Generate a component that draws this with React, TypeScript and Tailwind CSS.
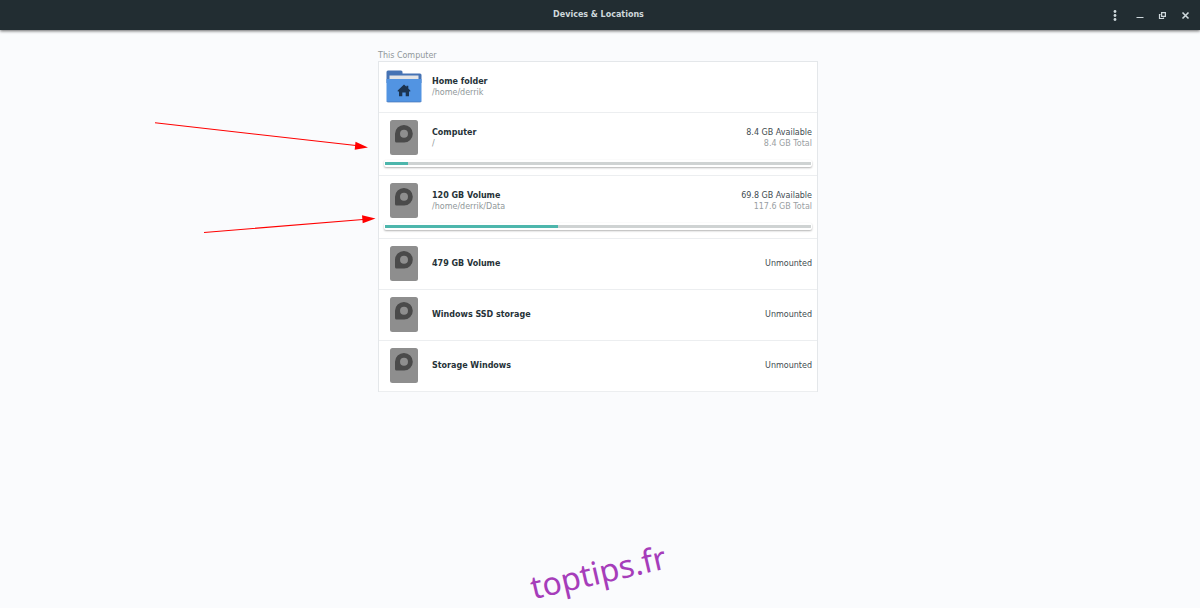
import React from 'react';

interface Place {
  name: string;
  kind: 'home' | 'drive';
  path?: string;
  available?: string;
  total?: string;
  used?: number;
}

const places: Place[] = [
  { name: 'Home folder', kind: 'home', path: '/home/derrik' },
  { name: 'Computer', kind: 'drive', path: '/', available: '8.4 GB Available', total: '8.4 GB Total', used: 5.4 },
  { name: '120 GB Volume', kind: 'drive', path: '/home/derrik/Data', available: '69.8 GB Available', total: '117.6 GB Total', used: 40.6 },
  { name: '479 GB Volume', kind: 'drive', available: 'Unmounted' },
  { name: 'Windows SSD storage', kind: 'drive', available: 'Unmounted' },
  { name: 'Storage Windows', kind: 'drive', available: 'Unmounted' },
];

const FolderIcon = () => (
  <svg width="36" height="35" viewBox="0 0 36 35" aria-hidden="true">
    <path d="M.5 3a1.500 1.500 0 0 1 1.500-1.500h13A1.500 1.500 0 0 1 16.500 3v1.500H34A1.500 1.500 0 0 1 35.500 6v8H.500z" fill="#4673b4" />
    <path d="M3.500 6.500h29V14h-29z" fill="#e3e4e6" />
    <path d="M.5 10h35v21.500a1.500 1.500 0 0 1-1.500 1.500H2a1.500 1.500 0 0 1-1.500-1.500z" fill="#5294e2" />
    <path d="M.6 32.200q.4.800 1.400.800h32q1 0 1.400-.800" fill="none" stroke="#4673b4" strokeWidth=".7" />
    <path d="M18 15.500l2.500 2.300v-1h1.800v2.700l2 2v1H23v4.700h-3.300v-3.700h-3.400v3.700H13v-4.700h-1.300v-1z" fill="#1c3450" />
  </svg>
);

const DriveIcon = () => (
  <svg width="28" height="35" viewBox="0 0 28 35" aria-hidden="true">
    <rect width="28" height="35" rx="2.500" fill="#8e8e8e" />
    <path d="M14 5a8.800 8.800 0 0 1 0 17.600H6.500A1.500 1.500 0 0 1 5 21.100V13.800A8.900 8.900 0 0 1 14 5z" fill="#4a4a4a" />
    <circle cx="14" cy="13.700" r="4" fill="#8e8e8e" />
  </svg>
);

const UsageBar = ({ label, used }: { label: string; used: number }) => (
  <div className="mt-[5px] rounded-xs bg-white px-px py-0.5 shadow-[0_1px_2px_rgba(0,0,0,0.3)]">
    <div
      role="progressbar"
      aria-label={`${label} usage`}
      aria-valuenow={used}
      aria-valuemin={0}
      aria-valuemax={100}
      className="h-[3px] bg-[#cfd3d3]"
    >
      <div className="h-full bg-[#4db6ac]" style={{ width: `${used}%` }} />
    </div>
  </div>
);

const PlaceRow = ({ place }: { place: Place }) => (
  <li className="border-b border-[#eceef0] px-[5px] pt-[7px] pb-2">
    <div className="flex h-[35px] items-center gap-2 leading-[11px]">
      <div className="flex w-10 shrink-0 justify-center">
        {place.kind === 'home' ? <FolderIcon /> : <DriveIcon />}
      </div>
      <div className="grow">
        <h3 className="font-bold text-[#263238]">{place.name}</h3>
        {place.path && <p className="text-[#90979a]">{place.path}</p>}
      </div>
      <div className="text-right">
        <p className="text-[#414b50]">{place.available}</p>
        {place.total && <p className="text-[#9aa0a3]">{place.total}</p>}
      </div>
    </div>
    {place.used && <UsageBar label={place.name} used={place.used} />}
  </li>
);

const TitleBar = () => (
  <header className="grid h-[30px] grid-cols-[1fr_auto_1fr] items-center bg-[#222d32] pr-[3px] text-[#cfd8dc] shadow-[0_1px_3px_rgba(0,0,0,0.6)]">
    <h1 className="col-start-2 font-bold">Devices &amp; Locations</h1>
    <div className="flex justify-end">
      <button type="button" aria-label="Menu" className="mr-0.5 flex h-6 w-[23px] items-center justify-center">
        <svg width="11" height="11" viewBox="0 0 11 11" fill="currentColor">
          <circle cx="6" cy="1.500" r="1.400" />
          <circle cx="6" cy="5.500" r="1.400" />
          <circle cx="6" cy="9.500" r="1.400" />
        </svg>
      </button>
      <button type="button" aria-label="Minimize" className="flex h-6 w-[23px] items-center justify-center">
        <svg width="9" height="9" viewBox="0 0 9 9" fill="currentColor">
          <path d="M1.500 6h7v1h-7z" />
        </svg>
      </button>
      <button type="button" aria-label="Restore" className="flex h-6 w-[23px] items-center justify-center">
        <svg width="9" height="9" viewBox="0 0 9 9" fill="none" stroke="currentColor" strokeWidth="1.200">
          <path d="M3.600 1.600h3.800v3.800H3.600z" />
          <path d="M2.500 3.500h-1v4h4v-1" />
        </svg>
      </button>
      <button type="button" aria-label="Close" className="flex h-6 w-[23px] items-center justify-center">
        <svg width="9" height="9" viewBox="0 0 9 9" fill="none" stroke="currentColor" strokeWidth="1.600">
          <path d="M1.500 1.500l6 6M7.500 1.500l-6 6" />
        </svg>
      </button>
    </div>
  </header>
);

// Red pointers laid over the page, ending at the two mounted volumes
const Pointers = () => (
  <svg
    className="pointer-events-none absolute top-0 right-full"
    width="230"
    height="200"
    viewBox="0 0 230 200"
    fill="#ff0000"
    stroke="#ff0000"
    aria-hidden="true"
  >
    <path d="M7 72.800L208 95.500M56 182.500L215 169.500" strokeWidth="1.100" />
    <path d="M207.500 91.700L206.700 99.700L220 97.500zM214 165.200L214.700 173.200L227.500 168.500z" stroke="none" />
  </svg>
);

export default function App() {
  return (
    <div className="flex min-h-screen flex-col overflow-hidden bg-[#fafbfd] font-['DejaVu_Sans',sans-serif] text-[8px]">
      <TitleBar />
      <main className="pt-5 pr-1">
        <section className="relative mx-auto max-w-[440px]">
          <h2 className="leading-[11px] text-[#90979a]">This Computer</h2>
          <ul className="border-x border-t border-[#e4e7ea] bg-white">
            {places.map((place) => (
              <PlaceRow key={place.name} place={place} />
            ))}
          </ul>
          <Pointers />
        </section>
      </main>
      <footer className="mt-auto flex justify-center pr-1 pb-4">
        <p className="-rotate-13 font-['Noto_Sans',sans-serif] text-[32px] leading-10 text-[#a63dba]">
          toptips.fr
        </p>
      </footer>
    </div>
  );
}
